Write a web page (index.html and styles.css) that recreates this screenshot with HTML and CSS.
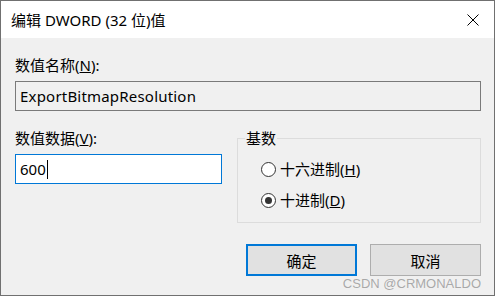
FILE: index.html
```html
<!DOCTYPE html>
<html lang="zh-CN">
<head>
    <meta charset="UTF-8" />
    <title>编辑 DWORD (32 位)值</title>
    <link rel="stylesheet" href="styles.css">
</head>
<body>
  <div class="window">
    <header class="titlebar">
      <span class="title">编辑 DWORD (32 位)值</span>
      <svg class="close" width="12" height="12" viewBox="0 0 12 12">
        <path d="M0.5 0.5 L11.5 11.5 M11.5 0.5 L0.5 11.5" stroke="#000" stroke-width="1" fill="none" />
      </svg>
    </header>

    <main class="content">
      <label class="label">数值名称(<u>N</u>):</label>
      <div class="field readonly">ExportBitmapResolution</div>

      <div class="row">
        <div class="col">
          <label class="label">数值数据(<u>V</u>):</label>
          <div class="field active">600<span class="caret"></span></div>
        </div>

        <fieldset class="group">
          <legend>基数</legend>
          <div class="radio"><span class="dot"></span>十六进制(<u>H</u>)</div>
          <div class="radio"><span class="dot checked"></span>十进制(<u>D</u>)</div>
        </fieldset>
      </div>

      <div class="buttons">
        <button class="btn default">确定</button>
        <button class="btn">取消</button>
      </div>
    </main>

    <div class="watermark">CSDN @CRMONALDO</div>
  </div>
</body>
</html>
```

FILE: styles.css
```css
* {
    margin: 0;
    padding: 0;
    box-sizing: border-box;
}

body {
    background: #fff;
    font-family: 'Noto Sans', 'Noto Sans CJK SC', sans-serif;
    font-size: 15px;
    color: #000;
}

.window {
    position: relative;
    width: 495px;
    height: 296px;
    border: 1px solid #707070;
    display: flex;
    flex-direction: column;
    background: #f0f0f0;
}

.titlebar {
    height: 37px;
    background: #fff;
    display: flex;
    align-items: center;
    justify-content: space-between;
    padding: 0 15px 0 10px;
}

.title {
    font-size: 15px;
    line-height: 20px;
}

.content {
    flex: 1;
    padding: 17px 13px 0 14px;
    display: flex;
    flex-direction: column;
}

.label {
    display: block;
    line-height: 20px;
}

.field {
    margin-top: 6px;
    height: 30px;
    border: 1px solid #7a7a7a;
    padding: 0 4px;
    line-height: 28px;
    display: flex;
    align-items: center;
}

    .field.readonly {
        letter-spacing: 0.2px;
    }

    .field.active {
        background: #fff;
        border-color: #0078d7;
    }

.caret {
    width: 1px;
    height: 19px;
    background: #000;
    margin-left: 1px;
}

.row {
    display: flex;
    gap: 15px;
    margin-top: 17px;
}

.col {
    width: 207px;
}

.group {
    flex: 1;
    border: 1px solid #dcdcdc;
    padding: 0 0 12px 7px;
    min-width: 0;
}

    .group legend {
        padding: 0 1px;
        line-height: 20px;
    }

.radio {
    display: flex;
    align-items: center;
    line-height: 20px;
    margin: 11px 0 0 16px;
}

.dot {
    flex-shrink: 0;
    width: 15px;
    height: 15px;
    border: 1px solid #333;
    border-radius: 50%;
    background: #fff;
    margin-right: 4px;
    display: flex;
    align-items: center;
    justify-content: center;
}

    .dot.checked::after {
        content: '';
        width: 7px;
        height: 7px;
        border-radius: 50%;
        background: #333;
    }

.buttons {
    display: flex;
    justify-content: flex-end;
    gap: 13px;
    margin-top: 21px;
}

.btn {
    width: 111px;
    height: 32px;
    background: #e1e1e1;
    border: 1px solid #adadad;
    font-family: inherit;
    font-size: 15px;
    color: #000;
}

    .btn.default {
        border: 2px solid #0078d7;
    }

.watermark {
    position: absolute;
    right: 13px;
    top: 275px;
    font-family: 'Liberation Sans', sans-serif;
    font-size: 13px;
    color: rgba(120, 120, 120, 0.6);
}
```
